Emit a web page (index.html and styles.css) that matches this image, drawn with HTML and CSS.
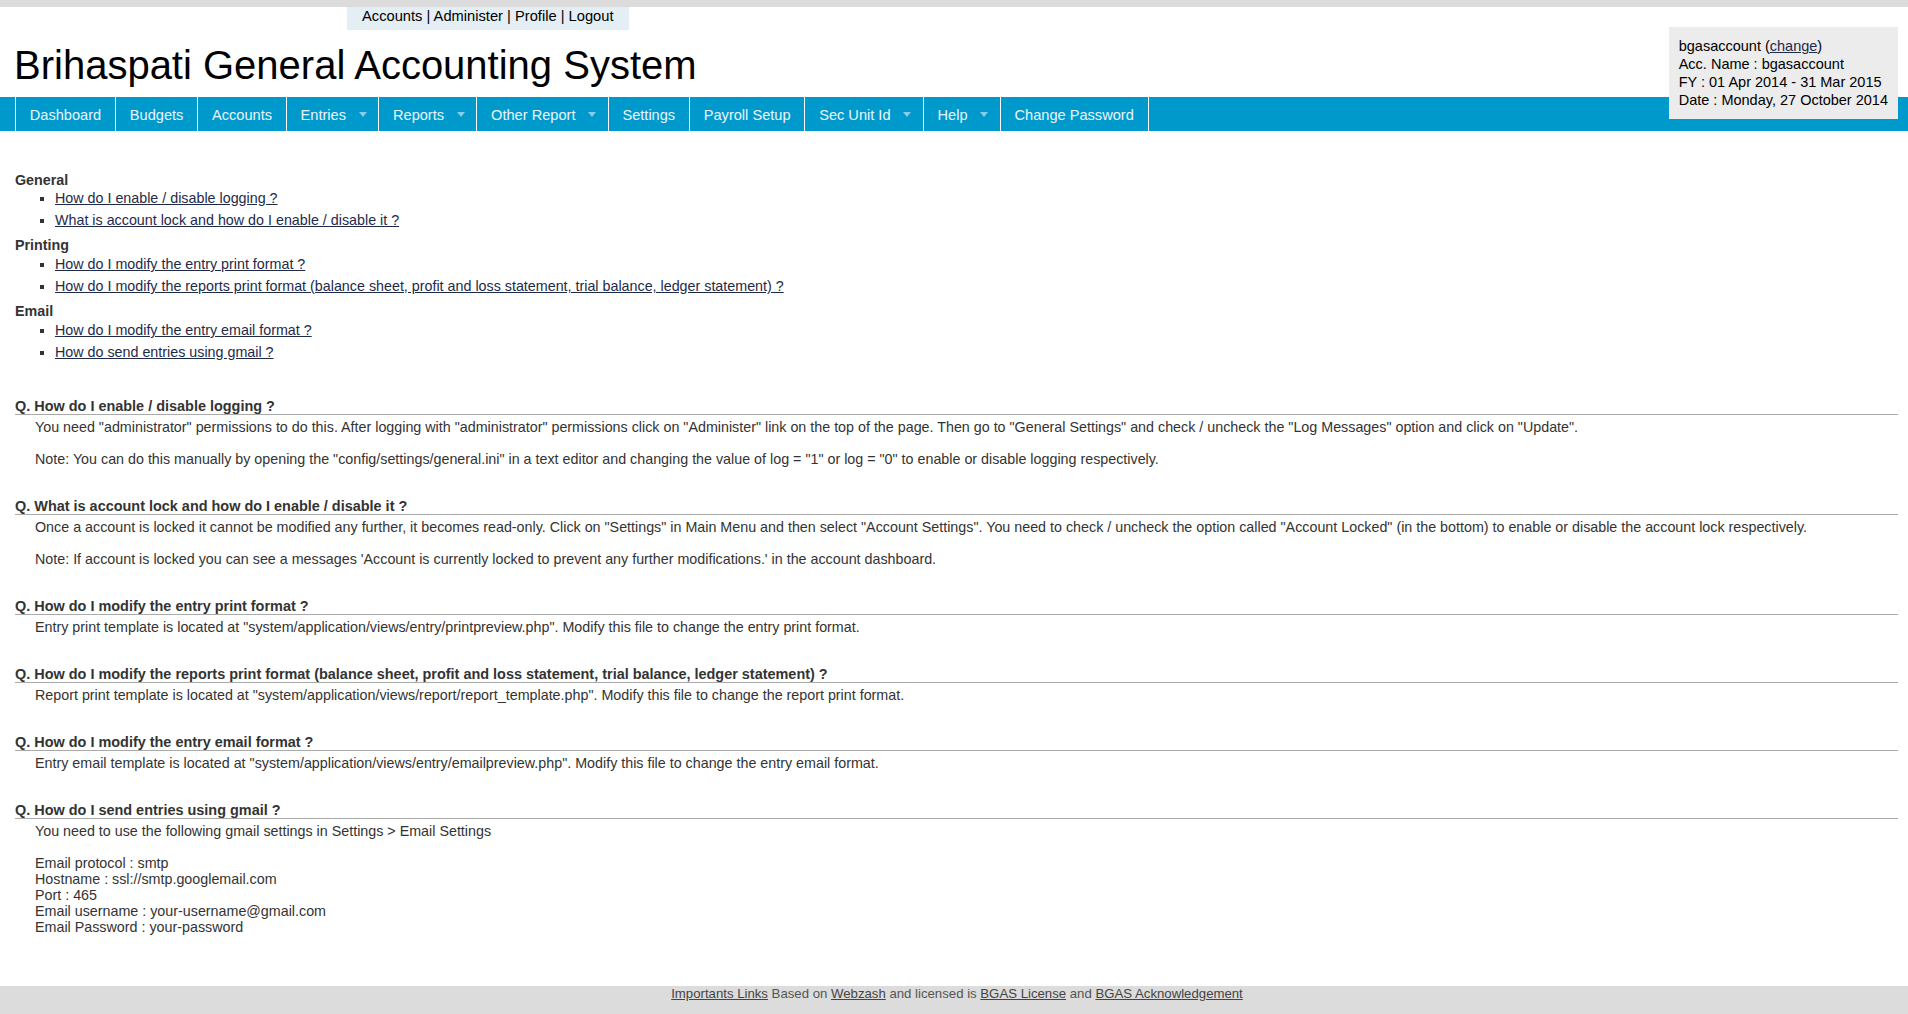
FILE: index.html
```html
<!DOCTYPE html>
<html lang="en">
<head>
<meta charset="utf-8">
<title>Brihaspati General Accounting System</title>
<link rel="stylesheet" href="styles.css">
</head>
<body>
<div class="topbar"></div>
<header class="header">
  <div class="toplinks"><a href="#">Accounts</a> | <a href="#">Administer</a> | <a href="#">Profile</a> | <a href="#">Logout</a></div>
  <h1 class="title">Brihaspati General Accounting System</h1>
</header>
<div class="infobox">
  <div>bgasaccount (<a href="#">change</a>)</div>
  <div>Acc. Name : bgasaccount</div>
  <div>FY : 01 Apr 2014 - 31 Mar 2015</div>
  <div>Date : Monday, 27 October 2014</div>
</div>
<nav class="menu">
  <ul>
    <li><a href="#">Dashboard</a></li>
    <li><a href="#">Budgets</a></li>
    <li><a href="#">Accounts</a></li>
    <li class="sub"><a href="#">Entries</a><span class="arrow"></span></li>
    <li class="sub"><a href="#">Reports</a><span class="arrow"></span></li>
    <li class="sub"><a href="#">Other Report</a><span class="arrow"></span></li>
    <li><a href="#">Settings</a></li>
    <li><a href="#">Payroll Setup</a></li>
    <li class="sub"><a href="#">Sec Unit Id</a><span class="arrow"></span></li>
    <li class="sub"><a href="#">Help</a><span class="arrow"></span></li>
    <li><a href="#">Change Password</a></li>
  </ul>
</nav>
<main class="content">
  <div class="faq-index">
    <div class="cat">General</div>
    <ul class="first">
      <li><a href="#">How do I enable / disable logging ?</a></li>
      <li><a href="#">What is account lock and how do I enable / disable it ?</a></li>
    </ul>
    <div class="cat">Printing</div>
    <ul>
      <li><a href="#">How do I modify the entry print format ?</a></li>
      <li><a href="#">How do I modify the reports print format (balance sheet, profit and loss statement, trial balance, ledger statement) ?</a></li>
    </ul>
    <div class="cat">Email</div>
    <ul>
      <li><a href="#">How do I modify the entry email format ?</a></li>
      <li><a href="#">How do send entries using gmail ?</a></li>
    </ul>
  </div>

  <section class="qa">
    <div class="q">Q. How do I enable / disable logging ?</div>
    <div class="a">You need "administrator" permissions to do this. After logging with "administrator" permissions click on "Administer" link on the top of the page. Then go to "General Settings" and check / uncheck the "Log Messages" option and click on "Update".<br><br>Note: You can do this manually by opening the "config/settings/general.ini" in a text editor and changing the value of log = "1" or log = "0" to enable or disable logging respectively.</div>
  </section>

  <section class="qa">
    <div class="q">Q. What is account lock and how do I enable / disable it ?</div>
    <div class="a">Once a account is locked it cannot be modified any further, it becomes read-only. Click on "Settings" in Main Menu and then select "Account Settings". You need to check / uncheck the option called "Account Locked" (in the bottom) to enable or disable the account lock respectively.<br><br>Note: If account is locked you can see a messages 'Account is currently locked to prevent any further modifications.' in the account dashboard.</div>
  </section>

  <section class="qa">
    <div class="q">Q. How do I modify the entry print format ?</div>
    <div class="a">Entry print template is located at "system/application/views/entry/printpreview.php". Modify this file to change the entry print format.</div>
  </section>

  <section class="qa">
    <div class="q">Q. How do I modify the reports print format (balance sheet, profit and loss statement, trial balance, ledger statement) ?</div>
    <div class="a">Report print template is located at "system/application/views/report/report_template.php". Modify this file to change the report print format.</div>
  </section>

  <section class="qa">
    <div class="q">Q. How do I modify the entry email format ?</div>
    <div class="a">Entry email template is located at "system/application/views/entry/emailpreview.php". Modify this file to change the entry email format.</div>
  </section>

  <section class="qa">
    <div class="q">Q. How do I send entries using gmail ?</div>
    <div class="a">You need to use the following gmail settings in Settings &gt; Email Settings<br><br>Email protocol : smtp<br>Hostname : ssl://smtp.googlemail.com<br>Port : 465<br>Email username : your-username@gmail.com<br>Email Password : your-password</div>
  </section>
</main>
<footer class="footer">
  <a href="#">Importants Links</a> Based on <a href="#">Webzash</a> and licensed is <a href="#">BGAS License</a> and <a href="#">BGAS Acknowledgement</a>
</footer>
</body>
</html>
```

FILE: styles.css
```css
html, body {
  margin: 0;
  padding: 0;
}

body {
  font-family: "Liberation Sans", Arial, sans-serif;
  color: #333;
  background: #fff;
  min-height: 100vh;
  display: flex;
  flex-direction: column;
  position: relative;
}

.topbar {
  height: 7px;
  background: #dcdcdc;
}

.header {
  display: flex;
  flex-direction: column;
  align-items: flex-start;
}

.toplinks {
  margin-left: 347px;
  padding: 0 15px 5px;
  line-height: 18px;
  font-size: 14.7px;
  background: #e3eef5;
  color: #000;
}

.toplinks a {
  color: #000;
  text-decoration: none;
}

.title {
  margin: 12px 0 9px 14px;
  font-size: 40px;
  line-height: 46px;
  font-weight: normal;
  color: #000;
}

.infobox {
  position: absolute;
  top: 27px;
  right: 10px;
  z-index: 2;
  background: #ececec;
  padding: 10px;
  font-size: 14.5px;
  line-height: 18px;
  color: #000;
}

.infobox a {
  color: #1e2a4a;
}

.menu {
  background: #0099cc;
  height: 34px;
}

.menu ul {
  list-style: none;
  margin: 0 0 0 15px;
  padding: 0;
  display: flex;
  height: 34px;
  border-left: 1px solid #fff;
}

.menu li {
  position: relative;
  border-right: 1px solid #fff;
}

.menu a {
  display: block;
  padding: 2px 13.8px 0;
  line-height: 32px;
  font-size: 14.6px;
  color: #eaf6fb;
  text-decoration: none;
}

.menu li.sub a {
  padding-right: 32.2px;
}

.menu .arrow {
  position: absolute;
  right: 11.5px;
  top: 15px;
  width: 0;
  height: 0;
  border-left: 4.5px solid transparent;
  border-right: 4.5px solid transparent;
  border-top: 5px solid #86cde8;
}

.content {
  padding: 39px 10px 0 15px;
  font-size: 14.3px;
}

.faq-index {
  margin-bottom: 31px;
}

.cat {
  font-weight: bold;
  line-height: 20px;
  color: #333;
}

.faq-index ul {
  list-style: square;
  margin: 0;
  padding: 0 0 2px 40px;
}

.faq-index ul.first {
  margin-top: -1px;
}

.faq-index li {
  line-height: 18px;
  margin-bottom: 4px;
}

.faq-index a {
  color: #1e2a4a;
}

.qa + .qa {
  margin-top: 31px;
}

.q {
  font-weight: bold;
  font-size: 14.45px;
  line-height: 16px;
  border-bottom: 1px solid #aaa;
  color: #333;
}

.a {
  padding: 4px 0 0 20px;
  line-height: 16px;
}

.footer {
  margin-top: auto;
  background: #dcdcdc;
  text-align: center;
  font-size: 13.2px;
  line-height: 15px;
  padding: 0 0 13px 6px;
  color: #555;
}

.footer a {
  color: #444;
}
```
